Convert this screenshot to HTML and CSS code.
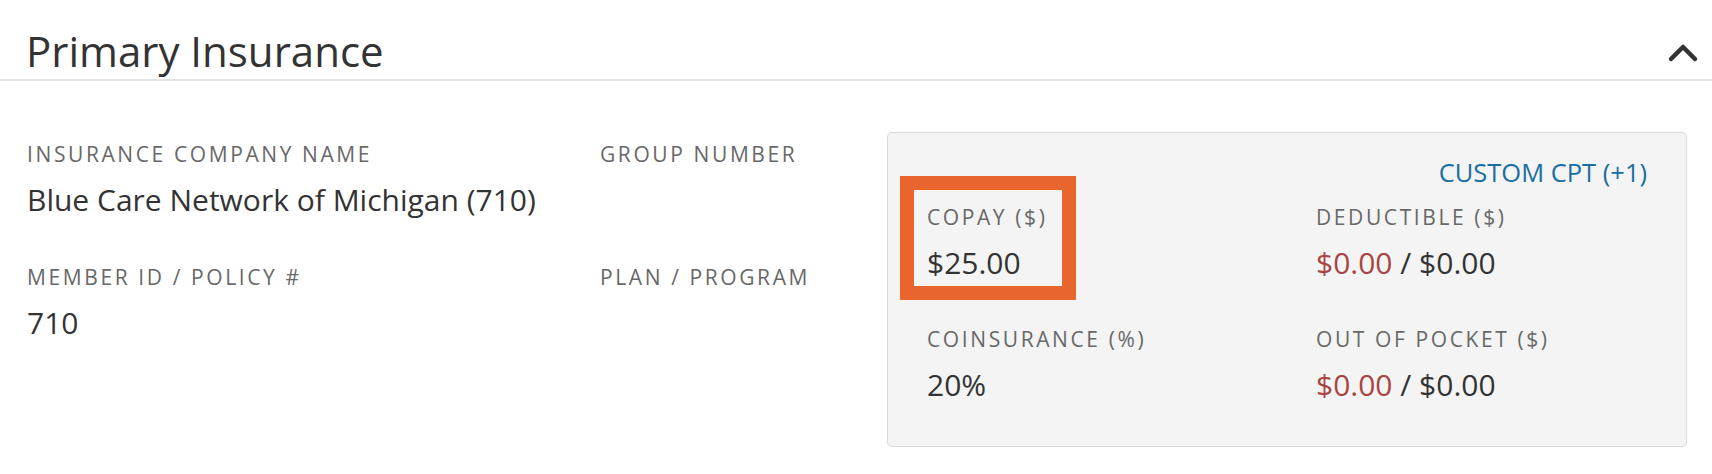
FILE: index.html
```html
<!DOCTYPE html>
<html lang="en">
<head>
<meta charset="utf-8">
<title>Primary Insurance</title>
<link rel="stylesheet" href="styles.css">
</head>
<body>
<section class="panel">
  <header class="panel-header">
    <h2 class="panel-title">Primary Insurance</h2>
    <button class="collapse-btn" aria-label="Collapse">
      <svg width="32" height="20" viewBox="0 0 32 20"><polyline points="4,16 16,4 28,16" fill="none" stroke="#333" stroke-width="4.5" stroke-linecap="round" stroke-linejoin="round"/></svg>
    </button>
  </header>
  <div class="panel-body">
    <div class="details">
      <div class="field">
        <div class="label">Insurance Company Name</div>
        <div class="value">Blue Care Network of Michigan (710)</div>
      </div>
      <div class="field">
        <div class="label">Group Number</div>
        <div class="value"></div>
      </div>
      <div class="field">
        <div class="label">Member ID / Policy #</div>
        <div class="value">710</div>
      </div>
      <div class="field">
        <div class="label">Plan / Program</div>
        <div class="value"></div>
      </div>
    </div>
    <div class="benefits">
      <div class="benefits-top"><a class="cpt-link" href="#">CUSTOM CPT (+1)</a></div>
      <div class="benefits-grid">
        <div class="field highlight">
          <span class="highlight-frame"></span>
          <div class="label">Copay ($)</div>
          <div class="value">$25.00</div>
        </div>
        <div class="field">
          <div class="label">Deductible ($)</div>
          <div class="value"><span class="neg">$0.00</span> / $0.00</div>
        </div>
        <div class="field">
          <div class="label">Coinsurance (%)</div>
          <div class="value">20%</div>
        </div>
        <div class="field">
          <div class="label">Out of Pocket ($)</div>
          <div class="value"><span class="neg">$0.00</span> / $0.00</div>
        </div>
      </div>
    </div>
  </div>
</section>
</body>
</html>
```
FILE: styles.css
```css
html, body {
  margin: 0;
  background: #fff;
}
body {
  font-family: "Open Sans", "Liberation Sans", sans-serif;
  color: #333;
}
.panel-header {
  display: flex;
  justify-content: space-between;
  align-items: flex-start;
  padding: 22px 13px 0 26px;
  border-bottom: 2px solid #e3e3e3;
}
.panel-title {
  margin: 0;
  font-size: 42px;
  font-weight: 400;
  line-height: 57px;
  color: #333;
}
.collapse-btn {
  margin-top: 21px;
  border: 0;
  background: none;
  padding: 0;
  width: 32px;
  height: 20px;
  display: block;
}
.collapse-btn svg {
  display: block;
}
.panel-body {
  display: flex;
  align-items: flex-start;
  padding: 51px 25px 0 27px;
}
.details {
  flex: 1;
  display: grid;
  grid-template-columns: 573px 1fr;
  row-gap: 41px;
  padding-top: 7px;
}
.benefits {
  width: 800px;
  box-sizing: border-box;
  background: #f4f4f4;
  border: 1px solid #d9d9d9;
  border-radius: 5px;
  padding: 23px 39px 40px 39px;
}
.benefits-top {
  display: flex;
  justify-content: flex-end;
}
.cpt-link {
  font-size: 25.5px;
  line-height: 33px;
  color: #1a6ea1;
  text-decoration: none;
}
.benefits-grid {
  display: grid;
  grid-template-columns: 389px 1fr;
  row-gap: 40px;
  margin-top: 13px;
}
.label {
  font-size: 21px;
  line-height: 30px;
  letter-spacing: 2.6px;
  color: #686868;
  text-transform: uppercase;
}
.value {
  font-size: 30px;
  line-height: 42px;
  margin-top: 10px;
  min-height: 42px;
  color: #333;
}
.neg {
  color: #a94442;
}
.highlight {
  position: relative;
}
.highlight-frame {
  position: absolute;
  left: -27px;
  top: -26px;
  width: 176px;
  height: 124px;
  box-sizing: border-box;
  border: 14px solid #e8652e;
}
```
